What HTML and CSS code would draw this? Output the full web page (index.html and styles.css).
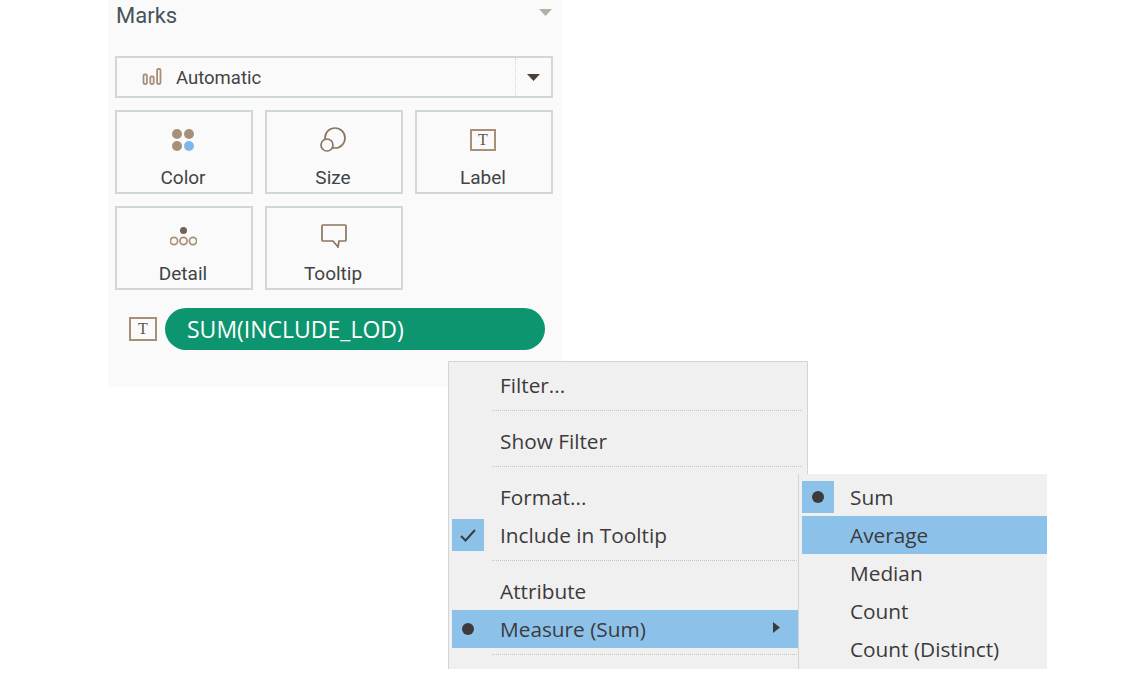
FILE: index.html
```html
<!DOCTYPE html>
<html lang="en">
<head>
  <meta charset="UTF-8">
  <meta name="viewport" content="width=device-width, initial-scale=1.0">
  <title>Marks</title>
  <link rel="stylesheet" href="styles.css">
</head>
<body>
  <section class="marks">
    <div class="marks-head">
      <span class="marks-title">Marks</span>
      <svg class="marks-caret" width="13" height="7" viewBox="0 0 13 7"><path d="M0 0h13L6.500 7z" fill="#b5b0a6"/></svg>
    </div>

    <div class="mark-type">
      <div class="mark-type-name">
        <svg width="20" height="18" viewBox="0 0 20 18" fill="none" stroke="#a89078" stroke-width="1.8">
          <rect x="1.500" y="6.500" width="3.400" height="9.500" rx="1.200"/>
          <rect x="8.300" y="8.500" width="3.400" height="7.500" rx="1.200"/>
          <rect x="15.100" y="1" width="3.400" height="15" rx="1.200"/>
        </svg>
        <span class="mark-type-label">Automatic</span>
      </div>
      <div class="mark-type-btn">
        <svg width="13" height="7" viewBox="0 0 13 7"><path d="M0 0h13L6.500 7z" fill="#4a403a"/></svg>
      </div>
    </div>

    <div class="cards">
      <div class="card">
        <svg class="icon-color" width="22" height="22" viewBox="0 0 22 22">
          <circle cx="5" cy="5" r="5" fill="#a89078"/>
          <circle cx="17" cy="5" r="5" fill="#a89078"/>
          <circle cx="5" cy="17" r="5" fill="#a89078"/>
          <circle cx="17" cy="17" r="5" fill="#7db8e8"/>
        </svg>
        <span>Color</span>
      </div>
      <div class="card">
        <svg class="icon-size" width="26" height="26" viewBox="0 0 26 26" fill="none" stroke="#8a7560" stroke-width="1.7">
          <circle cx="15" cy="11" r="10"/>
          <circle cx="7" cy="18" r="6" fill="#fafafa"/>
        </svg>
        <span>Size</span>
      </div>
      <div class="card">
        <svg class="icon-label" width="26" height="22" viewBox="0 0 26 22">
          <rect x="1" y="1" width="24" height="20" fill="none" stroke="#a89078" stroke-width="2"/>
          <text x="13" y="16" class="t-glyph">T</text>
        </svg>
        <span>Label</span>
      </div>
      <div class="card">
        <svg class="icon-detail" width="27" height="19" viewBox="0 0 27 19" fill="none" stroke="#a89078" stroke-width="1.7">
          <circle cx="13.500" cy="3.500" r="3.500" fill="#6f6259" stroke="none"/>
          <circle cx="4" cy="14" r="3.600"/>
          <circle cx="13.500" cy="14" r="3.600"/>
          <circle cx="23" cy="14" r="3.600"/>
        </svg>
        <span>Detail</span>
      </div>
      <div class="card">
        <svg class="icon-tooltip" width="26" height="24" viewBox="0 0 26 24" fill="none" stroke="#8a7560" stroke-width="1.7">
          <path d="M2 1h22a1 1 0 0 1 1 1v14a1 1 0 0 1-1 1h-6l-1 6-5-6H2a1 1 0 0 1-1-1V2a1 1 0 0 1 1-1z"/>
        </svg>
        <span>Tooltip</span>
      </div>
    </div>

    <div class="shelf">
      <svg width="28" height="24" viewBox="0 0 28 24">
        <rect x="1" y="1" width="26" height="22" fill="none" stroke="#a89078" stroke-width="2"/>
        <text x="14" y="17" class="t-glyph">T</text>
      </svg>
      <div class="pill">SUM(INCLUDE_LOD)</div>
    </div>
  </section>

  <div class="menu menu-main">
    <div class="row"><span class="row-icon"></span>Filter...</div>
    <div class="sep"></div>
    <div class="row"><span class="row-icon"></span>Show Filter</div>
    <div class="sep"></div>
    <div class="row"><span class="row-icon"></span>Format...</div>
    <div class="row">
      <span class="row-icon checked">
        <svg width="16" height="13" viewBox="0 0 16 13" fill="none" stroke="#3d3a3c" stroke-width="2"><path d="M1 7l4.500 4.500L15 1"/></svg>
      </span>Include in Tooltip
    </div>
    <div class="sep"></div>
    <div class="row"><span class="row-icon"></span>Attribute</div>
    <div class="row active">
      <span class="row-icon"><span class="dot"></span></span>Measure (Sum)
      <svg class="row-arrow" width="7" height="11" viewBox="0 0 7 11"><path d="M0 0l7 5.500-7 5.500z" fill="#3d3a3c"/></svg>
    </div>
    <div class="sep"></div>
  </div>

  <div class="menu menu-sub">
    <div class="row"><span class="row-icon checked"><span class="dot"></span></span>Sum</div>
    <div class="row active"><span class="row-icon"></span>Average</div>
    <div class="row"><span class="row-icon"></span>Median</div>
    <div class="row"><span class="row-icon"></span>Count</div>
    <div class="row"><span class="row-icon"></span>Count (Distinct)</div>
  </div>
</body>
</html>
```

FILE: styles.css
```css
body {
  margin: 0;
  height: 677px;
  overflow: hidden;
  background: #fff;
  font-family: Roboto, sans-serif;
  color: #3f4448;
}

.marks {
  box-sizing: border-box;
  width: 454px;
  height: 387px;
  margin-left: 108px;
  padding: 0 9px 0 7px;
  background: #fafafa;
}
.marks-head {
  display: flex;
  justify-content: space-between;
  align-items: center;
  height: 30px;
  font-size: 22px;
  color: #47525a;
}
.marks-title {
  margin-left: 1px;
}
.marks-caret {
  margin: 0 1px 6px 0;
}

.mark-type {
  display: flex;
  box-sizing: border-box;
  height: 42px;
  margin-top: 26px;
  border: 2px solid #d0d7d6;
}
.mark-type-name {
  flex: 1;
  display: flex;
  align-items: center;
  gap: 14px;
  padding-left: 25px;
  font-size: 18.500px;
}
.mark-type-label {
  padding-top: 2px;
}
.mark-type-btn {
  display: flex;
  align-items: center;
  justify-content: center;
  width: 35px;
  border-left: 1px dotted #cfd6d5;
}

.cards {
  display: grid;
  grid-template-columns: repeat(3, 138px);
  grid-auto-rows: 84px;
  gap: 12px;
  margin-top: 12px;
}
.card {
  display: flex;
  flex-direction: column;
  align-items: center;
  justify-content: space-between;
  box-sizing: border-box;
  height: 84px;
  padding: 16px 2px 3px 0;
  border: 2px solid #d0d7d6;
  font-size: 19px;
}
.icon-color {
  margin: 1px 1px 0 0;
}
.icon-size {
  margin-top: -1px;
}
.icon-label {
  margin-top: 1px;
}
.icon-detail {
  margin-top: 3px;
}
.icon-tooltip {
  margin-left: 1px;
}

.t-glyph {
  font-family: "Liberation Serif", serif;
  font-size: 16px;
  text-anchor: middle;
  fill: #5e5650;
}

.shelf {
  display: flex;
  align-items: center;
  gap: 8px;
  margin-top: 18px;
  padding-left: 14px;
}
.pill {
  display: flex;
  align-items: center;
  box-sizing: border-box;
  width: 380px;
  height: 42px;
  padding-left: 22px;
  border-radius: 21px;
  background: #0d9570;
  color: #fff;
  font-family: "Open Sans", sans-serif;
  font-size: 23px;
}

/* context menus float over the panel */
.menu {
  position: absolute;
  box-sizing: border-box;
  background: #f0f0f0;
  border: 1px solid #cfd6d5;
  border-bottom: 0;
  font-family: "Open Sans", sans-serif;
  font-size: 20.800px;
  color: #3d3a3c;
}
.menu-main {
  left: 448px;
  top: 361px;
  width: 360px;
  height: 308px;
  padding: 4px 9px 0 3px;
}
.menu-sub {
  left: 798px;
  top: 474px;
  width: 249px;
  height: 195px;
  padding: 4px 0 0 3px;
  border-top: 0;
  border-right: 0;
}

.row {
  display: flex;
  align-items: center;
  position: relative;
  height: 38px;
}
.row.active {
  background: #8cc2ea;
}
.row-icon {
  display: flex;
  align-items: center;
  justify-content: center;
  width: 32px;
  height: 32px;
  margin-right: 16px;
}
.row-icon.checked {
  background: #8cc2ea;
}
.dot {
  width: 12px;
  height: 12px;
  border-radius: 50%;
  background: #3d3a3c;
}
.row-arrow {
  position: absolute;
  right: 18px;
  top: 12px;
}
.sep {
  height: 0;
  margin: 6px -3px 11px 40px;
  border-top: 1px dotted #c4c4c4;
}
```
